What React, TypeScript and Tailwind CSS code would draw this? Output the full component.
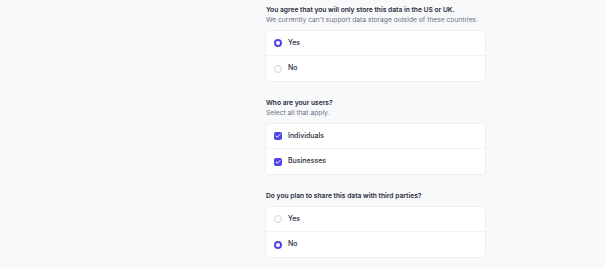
import { Check } from 'lucide-react';

type Option = { label: string; checked: boolean };

const Radio = ({ checked }: { checked: boolean }) => (
  <span
    className={`inline-block w-[8px] h-[8px] rounded-full shrink-0 ${
      checked ? 'border-[2.5px] border-[#4f46e5] bg-white' : 'border border-[#d1d5db] bg-white'
    }`}
  />
);

const Checkbox = ({ checked }: { checked: boolean }) => (
  <span
    className={`inline-flex items-center justify-center w-[8px] h-[8px] rounded-[2px] shrink-0 ${
      checked ? 'bg-[#4f46e5]' : 'border border-[#d1d5db] bg-white'
    }`}
  >
    {checked && <Check className="w-[6px] h-[6px] text-white" strokeWidth={4} />}
  </span>
);

function Question({
  title,
  subtitle,
  options,
  type,
}: {
  title: string;
  subtitle?: string;
  options: Option[];
  type: 'radio' | 'checkbox';
}) {
  return (
    <div>
      <p className="text-[6.7px] leading-[10px] font-semibold text-[#1f2937]">{title}</p>
      {subtitle && <p className="text-[6.7px] leading-[10px] text-[#6b7280]">{subtitle}</p>}
      <div className="mt-[6px] bg-white rounded-[3px] shadow-[0_0_0_1px_#eef0f3,0_1px_2px_rgba(0,0,0,0.03)] divide-y divide-[#f1f2f5]">
        {options.map((o) => (
          <div key={o.label} className="h-[25px] flex items-center pl-[8px] gap-[6px]">
            {type === 'radio' ? <Radio checked={o.checked} /> : <Checkbox checked={o.checked} />}
            <span className="text-[7px] font-medium text-[#1f2937]">{o.label}</span>
          </div>
        ))}
      </div>
    </div>
  );
}

export default function App() {
  return (
    <div
      className="w-[606px] h-[268px] bg-[#f8f9fb] overflow-hidden"
      style={{ fontFamily: 'Inter, "Noto Sans", sans-serif' }}
    >
      <div className="ml-[266px] w-[219px] pt-[5px] flex flex-col gap-[17px]">
        <Question
          title="You agree that you will only store this data in the US or UK."
          subtitle="We currently can't support data storage outside of these countries."
          type="radio"
          options={[
            { label: 'Yes', checked: true },
            { label: 'No', checked: false },
          ]}
        />
        <Question
          title="Who are your users?"
          subtitle="Select all that apply."
          type="checkbox"
          options={[
            { label: 'Individuals', checked: true },
            { label: 'Businesses', checked: true },
          ]}
        />
        <Question
          title="Do you plan to share this data with third parties?"
          type="radio"
          options={[
            { label: 'Yes', checked: false },
            { label: 'No', checked: true },
          ]}
        />
      </div>
    </div>
  );
}
